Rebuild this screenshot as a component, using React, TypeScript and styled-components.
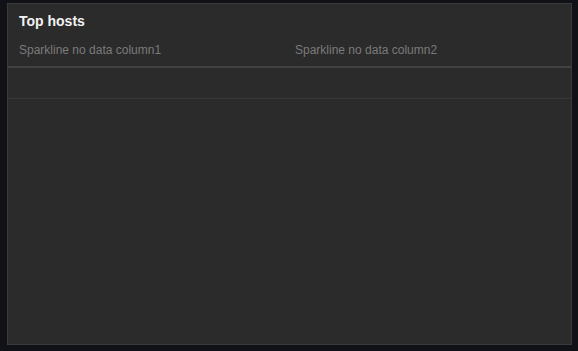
import styled, { createGlobalStyle } from "styled-components";

const GlobalStyle = createGlobalStyle`
  html, body {
    margin: 0;
    padding: 0;
    background: #111217;
    font-family: "Liberation Sans", Arial, sans-serif;
  }
`;

const Page = styled.div`
  width: 578px;
  height: 351px;
  padding: 3px 6px 6px 7px;
  box-sizing: border-box;
`;

const Panel = styled.div`
  height: 342px;
  background: #2b2b2b;
  border: 1px solid #3a3a3a;
  box-sizing: border-box;
  display: flex;
  flex-direction: column;
`;

const Title = styled.h2`
  margin: 0;
  padding: 8px 11px 0;
  height: 30px;
  box-sizing: border-box;
  font-size: 14px;
  line-height: 18px;
  font-weight: 700;
  color: #f2f2f2;
`;

const Row = styled.div<{ $header?: boolean }>`
  display: grid;
  grid-template-columns: 276px 1fr;
  align-items: center;
  height: ${(p) => (p.$header ? "32px" : "30px")};
  border-bottom: ${(p) => (p.$header ? "2px solid #424242" : "1px solid #373737")};
`;

const HeaderCell = styled.div`
  padding-left: 11px;
  font-size: 12px;
  color: #7a7a7a;
`;

const columns = ["Sparkline no data column1", "Sparkline no data column2"];

const App = () => {
  return (
    <Page>
      <GlobalStyle />
      <Panel>
        <Title>Top hosts</Title>
        <Row $header>
          {columns.map((c) => (
            <HeaderCell key={c}>{c}</HeaderCell>
          ))}
        </Row>
        <Row />
      </Panel>
    </Page>
  );
};

export default App;
